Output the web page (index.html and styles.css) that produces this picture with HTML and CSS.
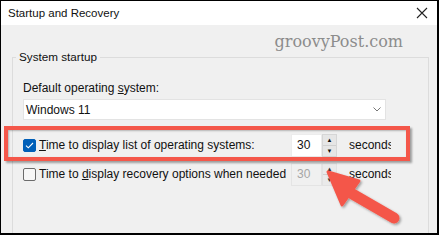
FILE: index.html
```html
<!DOCTYPE html>
<html>
<head>
<meta charset="utf-8">
<link rel="stylesheet" href="styles.css">
</head>
<body>
<div class="window">
  <div class="titlebar">
    <span class="title">Startup and Recovery</span>
    <svg class="close" width="12" height="12" viewBox="0 0 12 12"><path d="M1 1L11 11M11 1L1 11" stroke="#222" stroke-width="1.1" fill="none"/></svg>
  </div>
  <div class="content">
    <div class="watermark">groovyPost.com</div>
    <div class="group">
      <div class="legend">System startup</div>
      <div class="label">Default operating <u>s</u>ystem:</div>
      <div class="select">
        <span>Windows 11</span>
        <svg width="8" height="5" viewBox="0 0 8 5"><path d="M0.5 0.5L4 4L7.5 0.5" stroke="#777" stroke-width="1" fill="none"/></svg>
      </div>
      <div class="row">
        <div class="check-label">
          <span class="box checked"><svg width="9" height="7" viewBox="0 0 9 7"><path d="M1 3.6L3.3 5.8L8 1" stroke="#fff" stroke-width="1.1" fill="none"/></svg></span>
          <span><u>T</u>ime to display list of operating systems:</span>
        </div>
        <div class="spin">
          <div class="num">30</div>
          <div class="btns"><div class="btn">&#9650;</div><div class="btn">&#9660;</div></div>
        </div>
        <div class="unit">seconds</div>
      </div>
      <div class="row">
        <div class="check-label">
          <span class="box"></span>
          <span>Time to <u>d</u>isplay recovery options when needed</span>
        </div>
        <div class="spin disabled">
          <div class="num">30</div>
          <div class="btns"><div class="btn">&#9650;</div><div class="btn">&#9660;</div></div>
        </div>
        <div class="unit">seconds</div>
      </div>
    </div>
  </div>
  <div class="highlight"></div>
  <svg class="arrow" width="437" height="232" viewBox="0 0 437 232">
    <defs>
      <filter id="sh" x="-20%" y="-20%" width="140%" height="140%">
        <feDropShadow dx="1.5" dy="1.5" stdDeviation="1.2" flood-color="#000" flood-opacity="0.35"/>
      </filter>
    </defs>
    <g filter="url(#sh)" fill="#f4574a" stroke="#f4574a">
      <path d="M348 191L393 217" stroke-width="11" stroke-linecap="round" fill="none"/>
      <path d="M327 171L358 180L341 204Z" stroke-width="3" stroke-linejoin="round"/>
    </g>
  </svg>
</div>
</body>
</html>
```
FILE: styles.css
```css
* { box-sizing: border-box; }
html, body { margin: 0; padding: 0; }
body {
  width: 439px;
  height: 235px;
  overflow: hidden;
  font-family: "Liberation Sans", Arial, sans-serif;
  font-size: 12px;
  color: #111;
}
.window {
  position: relative;
  width: 439px;
  height: 235px;
  border-style: solid;
  border-color: #000;
  border-width: 1px 2px 2px 1px;
  background: #f0f0f0;
  display: flex;
  flex-direction: column;
  overflow: hidden;
}
.titlebar {
  height: 24px;
  background: #fff;
  display: flex;
  align-items: center;
  justify-content: space-between;
  padding: 0 9px 0 7px;
  flex: none;
}
.title { font-size: 11.5px; line-height: 16px; }
.close { display: block; }
.content { flex: 1; padding: 0 8px 0 11px; }
.watermark {
  height: 32px;
  display: flex;
  align-items: center;
  justify-content: flex-end;
  padding-right: 26px;
  font-family: "DejaVu Serif", serif;
  font-size: 16px;
  color: #8c8c8c;
}
.group {
  border: 1px solid #dcdcdc;
  border-bottom: none;
  height: 200px;
  padding: 0 10px;
}
.legend {
  margin: -9px 0 0 -7px;
  padding: 0 3px 0 3px;
  width: max-content;
  background: #f0f0f0;
  line-height: 16px;
  font-size: 11.7px;
}
.label { margin-top: 15px; line-height: 16px; }
.select {
  margin-top: 3px;
  width: 363px;
  height: 21px;
  background: #fff;
  border: 1px solid #e3e3e3;
  display: flex;
  align-items: center;
  justify-content: space-between;
  padding: 0 4px 0 2px;
}
.row {
  display: flex;
  align-items: center;
  height: 24px;
}
.select + .row { margin-top: 13px; }
.row + .row { margin-top: 5px; }
.check-label {
  width: 268px;
  display: flex;
  align-items: center;
  gap: 3px;
  white-space: nowrap;
}
.box {
  width: 13px;
  height: 13px;
  border: 1px solid #6b6b6b;
  border-radius: 2px;
  background: #f7f7f7;
  display: flex;
  align-items: center;
  justify-content: center;
  flex: none;
}
.box.checked { background: #005fb8; border-color: #005fb8; }
.spin { display: flex; height: 23px; }
.num {
  width: 31px;
  background: #fff;
  border: 1px solid #ececec;
  padding-left: 5px;
  line-height: 21px;
}
.btns {
  width: 15px;
  display: flex;
  flex-direction: column;
  border: 1px solid #d6d6d6;
  background: #e6e6e6;
}
.btn {
  flex: 1;
  font-size: 6px;
  line-height: 10px;
  text-align: center;
  color: #111;
}
.btn + .btn { border-top: 1px solid #d0d0d0; }
.spin.disabled .num { background: #f0f0f0; color: #a6a6a6; border-color: #e4e4e4; }
.spin.disabled .btns { background: #eaeaea; border-color: #e2e2e2; }
.spin.disabled .btn { color: #333; }
.unit {
  margin-left: 12px;
  width: 42px;
  overflow: hidden;
  white-space: nowrap;
}
.highlight {
  position: absolute;
  left: 3px;
  top: 125px;
  width: 406px;
  height: 35px;
  border: 4px solid #f4574a;
  box-shadow: 1.5px 1.5px 2px rgba(0,0,0,0.35), inset 1px 1px 2px rgba(0,0,0,0.25);
}
.arrow { position: absolute; left: 0; top: 0; }
```
